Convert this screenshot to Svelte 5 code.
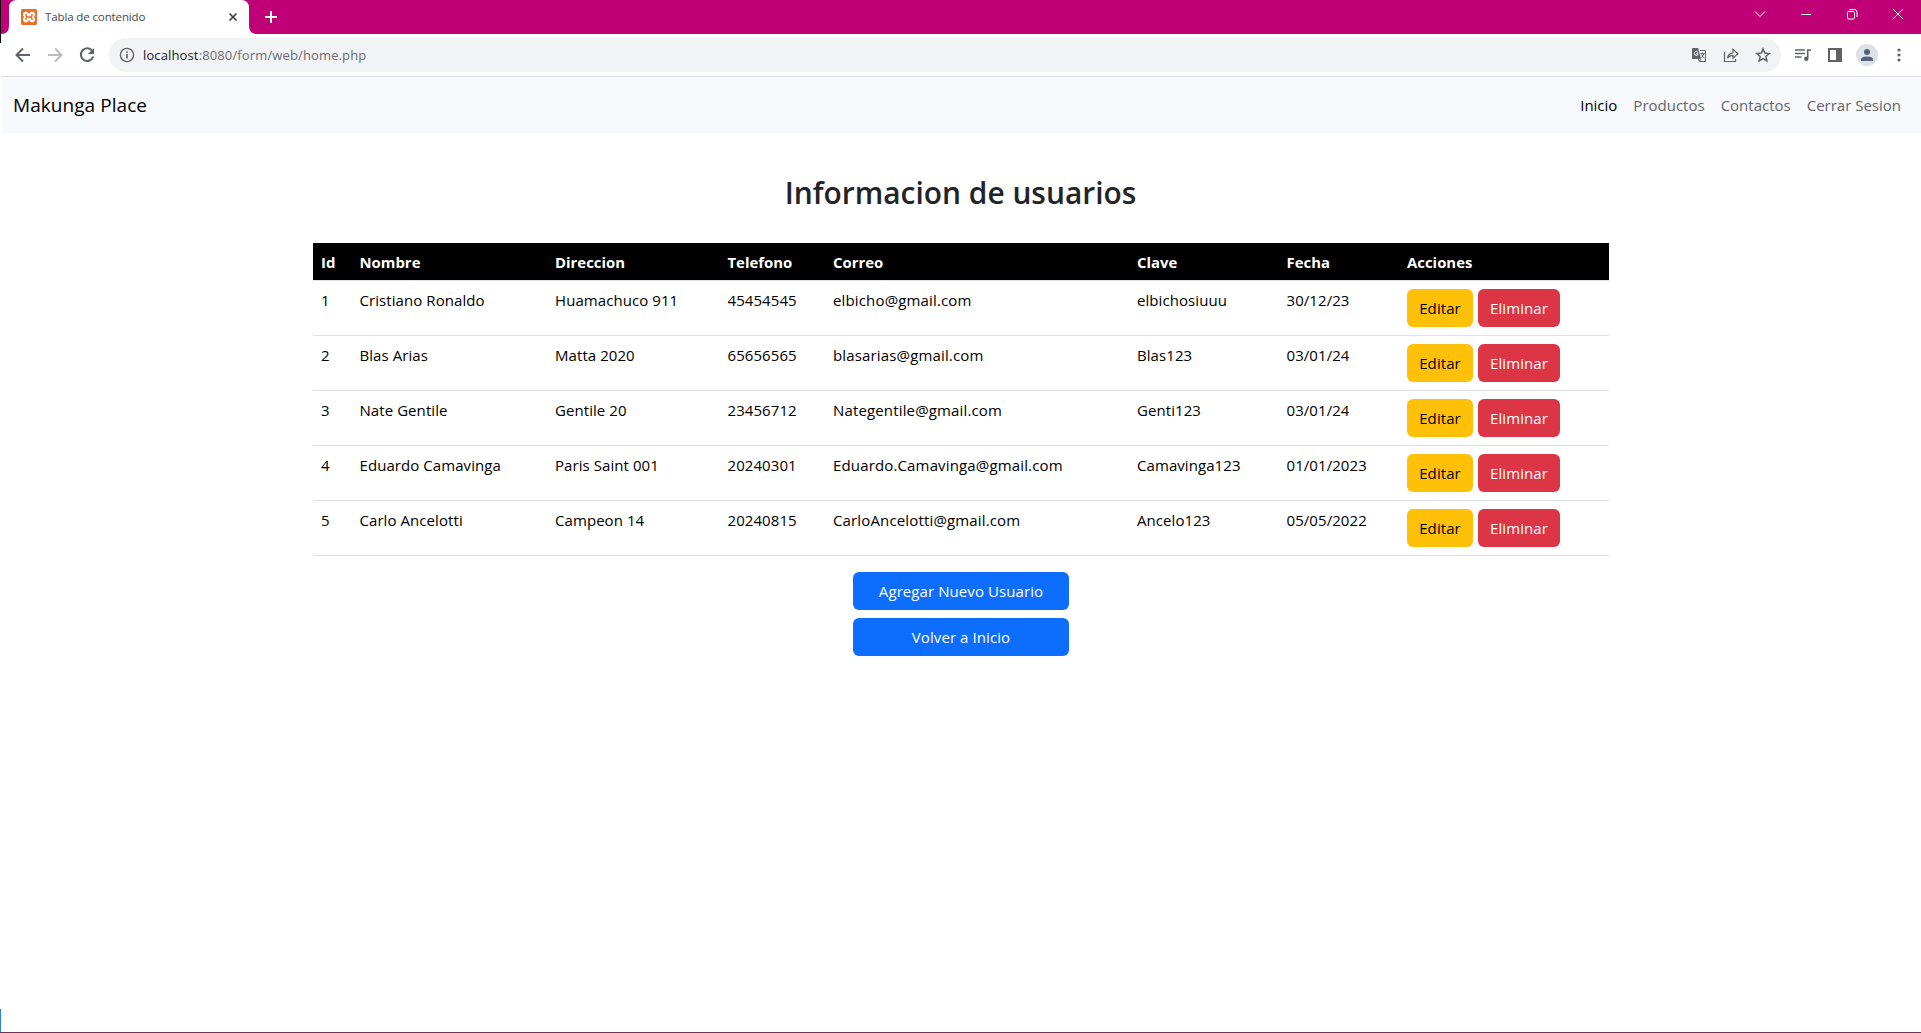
<script>
  const columns = ['Id', 'Nombre', 'Direccion', 'Telefono', 'Correo', 'Clave', 'Fecha', 'Acciones'];
  const users = [
    ['1', 'Cristiano Ronaldo', 'Huamachuco 911', '45454545', 'elbicho@gmail.com', 'elbichosiuuu', '30/12/23'],
    ['2', 'Blas Arias', 'Matta 2020', '65656565', 'blasarias@gmail.com', 'Blas123', '03/01/24'],
    ['3', 'Nate Gentile', 'Gentile 20', '23456712', 'Nategentile@gmail.com', 'Genti123', '03/01/24'],
    ['4', 'Eduardo Camavinga', 'Paris Saint 001', '20240301', 'Eduardo.Camavinga@gmail.com', 'Camavinga123', '01/01/2023'],
    ['5', 'Carlo Ancelotti', 'Campeon 14', '20240815', 'CarloAncelotti@gmail.com', 'Ancelo123', '05/05/2022']
  ];
</script>

<div class="window">
  <div class="tabstrip">
    <svg class="tabshape" width="260" height="34" viewBox="0 0 260 34"><path d="M1 34Q9 34 9 26V8Q9 0 17 0H241Q249 0 249 8V26Q249 34 257 34Z" fill="#fff" /></svg>
    <div class="tab">
      <svg width="16" height="16" viewBox="0 0 16 16"><rect width="16" height="16" rx="1.500" fill="#ea7027" /><g fill="#fff"><circle cx="4.900" cy="5.600" r="2.800" /><circle cx="11.100" cy="5.600" r="2.800" /><circle cx="4.900" cy="10.400" r="2.800" /><circle cx="11.100" cy="10.400" r="2.800" /><rect x="3" y="5.500" width="10" height="5" /></g><path d="M5 5.500V6.300L6 8 5 9.700V10.500M11 5.500V6.300L10 8 11 9.700V10.500M6 8H10" fill="none" stroke="#ea7027" stroke-width="1.500" stroke-linecap="round" /></svg>
      <span class="title">Tabla de contenido</span>
      <svg width="16" height="16" viewBox="0 0 16 16"><path d="M4.500 4.500l7 7m0-7l-7 7" stroke="#3c4043" stroke-width="1.700" /></svg>
    </div>
    <svg class="plus" width="14" height="14" viewBox="0 0 14 14"><path d="M7 1v12M1 7h12" stroke="#fff" stroke-width="2" /></svg>
    <div class="controls">
      <svg width="12" height="12" viewBox="0 0 12 12"><path d="M1 3.500l5 5 5-5" /></svg>
      <svg width="12" height="12" viewBox="0 0 12 12"><path d="M1 6.500h10" /></svg>
      <svg width="12" height="12" viewBox="0 0 12 12"><rect x="1.500" y="3.500" width="7" height="7.500" rx="1.200" /><path d="M3.500 1.500h5a2.500 2.500 0 0 1 2.500 2.500v5" /></svg>
      <svg width="12" height="12" viewBox="0 0 12 12"><path d="M1 1l10 10M11 1L1 11" /></svg>
    </div>
  </div>

  <div class="toolbar">
    <div class="navicons">
      <svg width="16" height="16" viewBox="0 0 16 16"><path d="M15 8H2M8 1.500L1.500 8 8 14.500" fill="none" stroke="#5f6368" stroke-width="2" /></svg>
      <svg width="16" height="16" viewBox="0 0 16 16"><path d="M1 8h13M8 1.500L14.500 8 8 14.500" fill="none" stroke="#babcbe" stroke-width="2" /></svg>
      <svg width="16" height="16" viewBox="0 0 16 16"><path d="M13.200 3.800A6.300 6.300 0 1 0 14.200 9.500" fill="none" stroke="#5f6368" stroke-width="2" /><path d="M15 1v6H9z" fill="#5f6368" /></svg>
    </div>
    <div class="address">
      <svg width="16" height="16" viewBox="0 0 16 16"><circle cx="8" cy="8" r="6.600" fill="none" stroke="#5f6368" stroke-width="1.400" /><path d="M8 7v4.500M8 4.200v1.600" stroke="#5f6368" stroke-width="1.700" /></svg>
      <span class="url"><b>localhost</b>:8080/form/web/home.php</span>
      <div class="pageicons">
        <svg width="16" height="16" viewBox="0 0 16 16"><path d="M1.500 1h5.600l2.900 11H1.500Q1 12 1 11.500v-10Q1 1 1.500 1z" fill="#5f6368" /><path d="M9 3.500h5.500v11h-6L7.500 12M8.500 14.500L10 12" fill="none" stroke="#5f6368" /><path d="M7 5.300A2 2 0 1 0 7 7.500V6.800H5.200" fill="none" stroke="#fff" /><path d="M9.200 6.500h4.600M11.400 5.500v1M13 6.500q-.6 2.600-3 4.200M10.500 7.500q1 2.300 3 3.700" fill="none" stroke="#5f6368" stroke-width=".9" /></svg>
        <svg width="16" height="16" viewBox="0 0 16 16"><path d="M1.500 5v9.500h11V12M4.500 11.200Q5 6.200 10 5.800V2.300L15 6.800l-5 4.300V8.300Q6.500 8.300 4.500 11.200z" fill="none" stroke="#5f6368" stroke-width="1.200" /></svg>
        <svg width="16" height="16" viewBox="0 0 16 16"><path d="M8 1.900l1.750 4.200 4.500.4-3.400 3 1 4.400L8 11.600l-3.850 2.300 1-4.400-3.400-3 4.500-.4z" fill="none" stroke="#5f6368" stroke-width="1.500" /></svg>
      </div>
    </div>
    <div class="tools">
      <svg width="16" height="16" viewBox="0 0 16 16"><path d="M0 3h10M0 6.500h10M0 10h6.500M12.700 11V3H16" fill="none" stroke="#5f6368" stroke-width="1.600" /><circle cx="11.300" cy="11.700" r="2.200" fill="#5f6368" /></svg>
      <svg class="panel" width="16" height="16" viewBox="0 0 16 16"><path d="M1 1h14v14H1zM3 3v10h6V3z" fill="#5f6368" fill-rule="evenodd" /></svg>
      <svg width="22" height="22" viewBox="0 0 22 22"><circle cx="11" cy="11" r="11" fill="#dee1e6" /><circle cx="11" cy="8" r="3" fill="#56607a" /><path d="M5 17v-1.500Q5 12.500 11 12.500t6 3V17z" fill="#56607a" /></svg>
      <svg width="16" height="16" viewBox="0 0 16 16" fill="#5f6368"><circle cx="8" cy="3" r="1.600" /><circle cx="8" cy="8" r="1.600" /><circle cx="8" cy="13" r="1.600" /></svg>
    </div>
  </div>

  <nav>
    <span class="brand">Makunga Place</span>
    <div class="links"><span class="active">Inicio</span><span>Productos</span><span>Contactos</span><span>Cerrar Sesion</span></div>
  </nav>

  <main>
    <h1>Informacion de usuarios</h1>
    <table>
      <colgroup><col class="c1" /><col class="c2" /><col class="c3" /><col class="c4" /><col class="c5" /><col class="c6" /><col class="c7" /><col class="c8" /></colgroup>
      <thead><tr>{#each columns as name}<th>{name}</th>{/each}</tr></thead>
      <tbody>
        {#each users as user}
          <tr>
            {#each user as value}<td class:email={value.includes('@')}>{value}</td>{/each}
            <td class="last"><div class="actions"><button class="edit">Editar</button><button class="delete">Eliminar</button></div></td>
          </tr>
        {/each}
      </tbody>
    </table>
    <div class="bottom">
      <button class="primary">Agregar Nuevo Usuario</button>
      <button class="primary">Volver a Inicio</button>
    </div>
  </main>
  <div class="leftedge"><i class="dark"></i><i class="blue"></i></div>
</div>

<style>
  :global(body) { margin: 0; background: #fff; }
  .window { position: relative; box-sizing: border-box; width: 1921px; height: 1033px; display: flex; flex-direction: column; overflow: hidden; border-bottom: 1px solid #67345a; background: #fff; font-family: 'Open Sans', 'Noto Sans', sans-serif; font-size: 15px; color: #000; }
  svg { display: block; flex: none; }
  .tabstrip { position: relative; height: 34px; flex: none; display: flex; align-items: center; background: #c00077; }
  .tabshape { position: absolute; left: 0; top: 0; }
  .tab { position: relative; box-sizing: border-box; width: 249px; padding: 0 8px 0 21px; display: flex; align-items: center; }
  .title { flex: 1; margin: -2px 0 0 8px; font-size: 11.500px; letter-spacing: -.12px; color: #45494d; }
  .plus { margin-left: 15px; }
  .controls { align-self: flex-start; margin-left: auto; margin-right: 17px; height: 28px; display: flex; align-items: center; gap: 34px; fill: none; stroke: #fff; stroke-width: 1; }
  .toolbar { box-sizing: border-box; height: 43px; flex: none; display: flex; align-items: center; padding: 0 14px 1px 15px; border-bottom: 1px solid #dadce0; }
  .navicons { display: flex; gap: 16px; }
  .address { box-sizing: border-box; flex: 1; height: 34px; margin-left: 14px; padding: 0 10px; display: flex; align-items: center; border-radius: 17px; background: #f1f3f4; }
  .url { margin-left: 8px; font-size: 13px; letter-spacing: .13px; color: #6a6e73; }
  .url b { font-weight: 400; color: #202124; }
  .pageicons { margin-left: auto; display: flex; gap: 16px; }
  .tools { margin-left: 14px; display: flex; align-items: center; gap: 13px; }
  .panel { margin-left: 3px; }
  nav { box-sizing: border-box; height: 56px; flex: none; padding: 0 20px 0 13px; display: flex; align-items: center; justify-content: space-between; background: #f8f9fc; }
  .brand { font-size: 19px; letter-spacing: .06px; }
  .links { display: flex; gap: 16px; color: #65666a; }
  .links .active { color: #000; }
  main { display: flex; flex-direction: column; align-items: center; }
  h1 { margin: 39px 0 29px; font-size: 29.900px; line-height: 42px; font-weight: 600; color: #212529; }
  table { width: 1296px; table-layout: fixed; border-collapse: separate; border-spacing: 0; }
  th, td { box-sizing: border-box; padding: 8px 8px 8px 8.500px; text-align: left; vertical-align: top; line-height: 22px; border-bottom: 1px solid #dee2e6; white-space: nowrap; }
  th { height: 38px; padding-bottom: 7px; font-size: 14.900px; font-weight: 700; background: #000; color: #fff; }
  td { height: 55px; letter-spacing: .07px; }
  td.email { letter-spacing: .15px; }
  td.last { padding-left: 8px; }
  .c1 { width: 38.500px; } .c2 { width: 195.500px; } .c3 { width: 172.500px; } .c4 { width: 105.500px; }
  .c5 { width: 304px; } .c6 { width: 149.500px; } .c7 { width: 120.500px; } .c8 { width: 210px; }
  .actions { display: flex; gap: 5px; }
  button { box-sizing: border-box; height: 38px; padding: 0 0 0 1px; border: 0; border-radius: 6px; font: inherit; line-height: 24px; letter-spacing: .08px; color: #fff; }
  .edit { width: 66px; background: #ffc107; color: #000; }
  .delete { width: 82px; background: #dc3545; }
  .bottom { display: flex; flex-direction: column; gap: 8px; width: 216px; margin-top: 16px; }
  .primary { background: #0d6efd; }
  .leftedge { position: absolute; left: 0; top: 0; width: 1px; height: 1033px; background: #fff; display: flex; flex-direction: column; justify-content: space-between; }
  .leftedge i { width: 1px; }
  .dark { height: 43px; background: #111; }
  .blue { height: 24px; background: #2b83d0; }
</style>
